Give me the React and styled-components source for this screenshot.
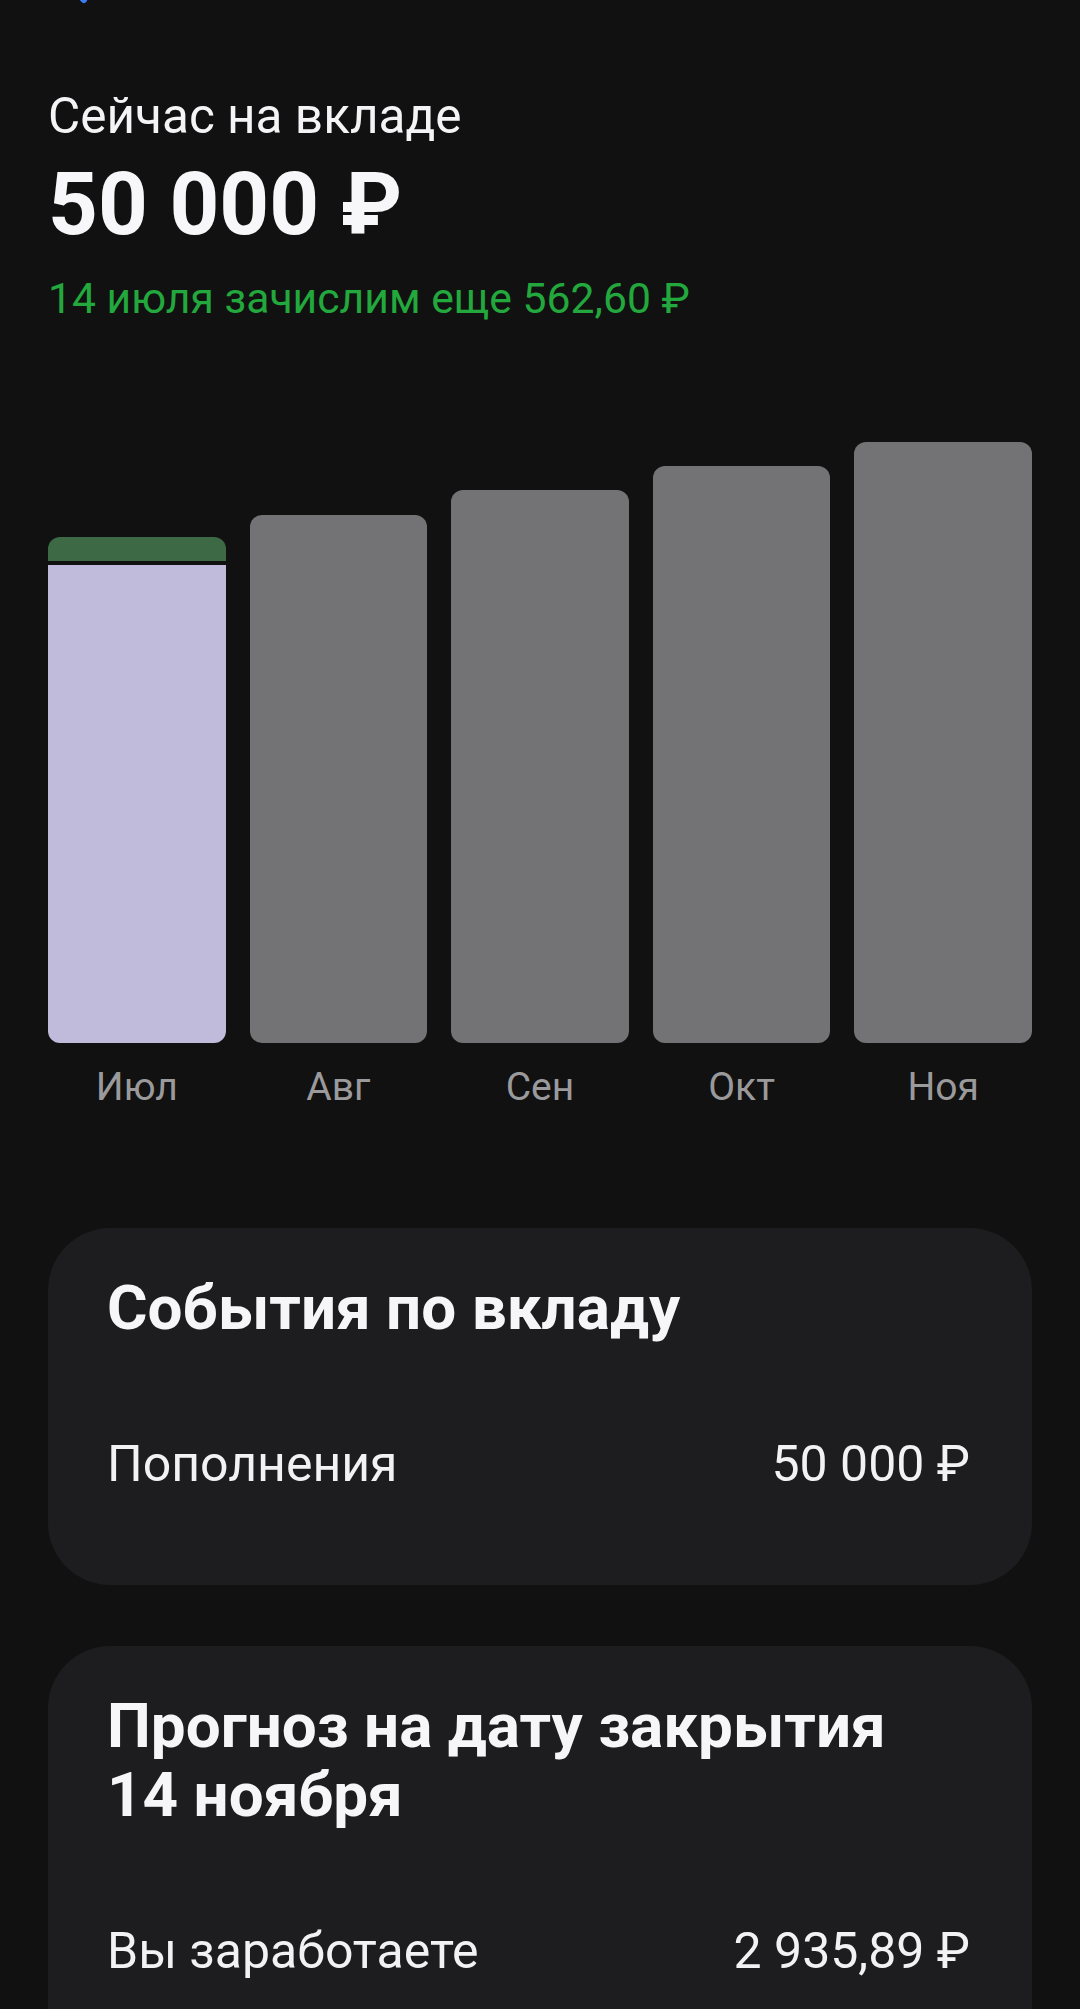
import React from "react";
import styled, { createGlobalStyle } from "styled-components";

const GlobalStyle = createGlobalStyle`
  html, body {
    margin: 0;
    padding: 0;
    background: #111111;
  }
  body {
    font-family: Roboto, "Noto Sans", "Liberation Sans", sans-serif;
    color: #f4f4f6;
    -webkit-font-smoothing: antialiased;
  }
`;

const Page = styled.div`
  min-height: 2009px;
  background: #111111;
  padding: 0 48px;
  box-sizing: border-box;
  overflow: hidden;
`;

const TopBar = styled.div`
  height: 4px;
  overflow: hidden;
  padding-left: 6px;
`;

const BackIcon = styled.svg`
  display: block;
  margin-top: -40px;
`;

const Summary = styled.section`
  padding-top: 84px;
  display: flex;
  flex-direction: column;
`;

const Caption = styled.div`
  font-size: 49.5px;
  line-height: 56px;
  font-weight: 400;
  color: #f4f4f6;
`;

const Amount = styled.div`
  font-size: 87px;
  line-height: 120px;
  font-weight: 700;
  color: #f7f7f9;
`;

const Accrual = styled.div`
  margin-top: 9px;
  font-size: 42.7px;
  line-height: 50px;
  color: #22a83c;
`;

const Chart = styled.div`
  margin-top: 120px;
  height: 600px;
  display: flex;
  align-items: flex-end;
  gap: 24px;
`;

const BarColumn = styled.div`
  flex: 1;
  display: flex;
  flex-direction: column;
  gap: 4px;
`;

const BarTop = styled.div`
  height: 24px;
  background: #3d6a45;
  border-radius: 12px 12px 0 0;
`;

const Bar = styled.div`
  background: ${(p) => (p.$current ? "#c1bbdb" : "#737375")};
  border-radius: ${(p) => (p.$current ? "0 0 12px 12px" : "12px")};
`;

const Labels = styled.div`
  margin-top: 21px;
  display: flex;
  gap: 24px;
`;

const Label = styled.div`
  flex: 1;
  text-align: center;
  font-size: 39px;
  line-height: 46px;
  color: #9a9a9c;
`;

const Card = styled.section`
  margin-top: ${(p) => p.$gap}px;
  background: #1d1d1f;
  border-radius: 62px;
  padding: 45px 62px 93px 59px;
`;

const CardTitle = styled.h2`
  margin: 0;
  font-size: 62px;
  line-height: 69px;
  font-weight: 700;
  color: #f6f6f8;
`;

const Row = styled.div`
  margin-top: 94px;
  display: flex;
  justify-content: space-between;
  font-size: 50px;
  line-height: 56px;
  color: #f2f2f4;
`;

const bars = [
  { month: "Июл", height: 478, current: true },
  { month: "Авг", height: 528 },
  { month: "Сен", height: 553 },
  { month: "Окт", height: 577 },
  { month: "Ноя", height: 601 },
];

export default function App() {
  return (
    <>
      <GlobalStyle />
      <Page>
        <TopBar>
          <BackIcon width="40" height="44" viewBox="0 0 40 44">
            <path
              d="M30 6 L12 23 L30 40"
              fill="none"
              stroke="#3d7bf5"
              strokeWidth="6"
              strokeLinecap="round"
              strokeLinejoin="round"
            />
          </BackIcon>
        </TopBar>
        <Summary>
          <Caption>Сейчас на вкладе</Caption>
          <Amount>50 000 ₽</Amount>
          <Accrual>14 июля зачислим еще 562,60 ₽</Accrual>
        </Summary>
        <Chart>
          {bars.map((b) => (
            <BarColumn key={b.month}>
              {b.current && <BarTop />}
              <Bar $current={b.current} style={{ height: b.height }} />
            </BarColumn>
          ))}
        </Chart>
        <Labels>
          {bars.map((b) => (
            <Label key={b.month}>{b.month}</Label>
          ))}
        </Labels>
        <Card $gap={118}>
          <CardTitle>События по вкладу</CardTitle>
          <Row>
            <span>Пополнения</span>
            <span>50 000 ₽</span>
          </Row>
        </Card>
        <Card $gap={61}>
          <CardTitle>
            Прогноз на дату закрытия
            <br />
            14 ноября
          </CardTitle>
          <Row>
            <span>Вы заработаете</span>
            <span>2 935,89 ₽</span>
          </Row>
        </Card>
      </Page>
    </>
  );
}
